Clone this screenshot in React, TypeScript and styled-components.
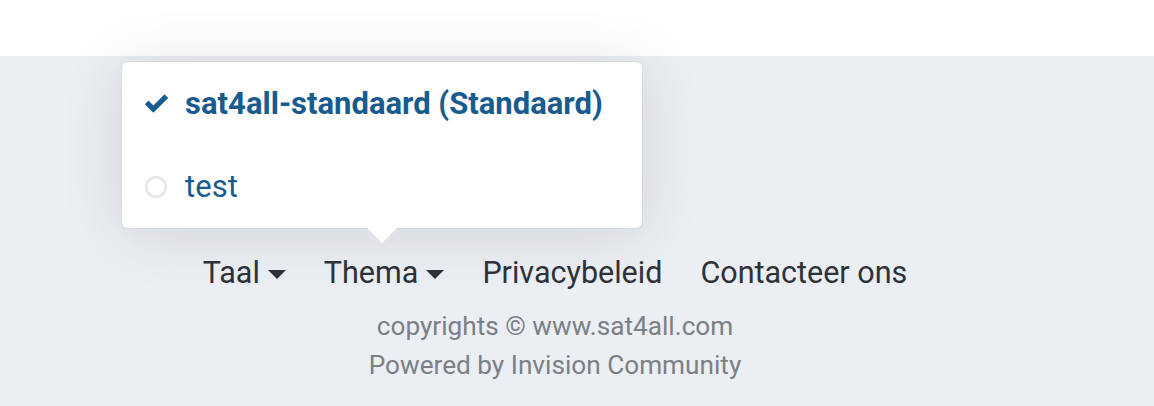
import React from "react";
import styled, { createGlobalStyle } from "styled-components";

const Global = createGlobalStyle`
  html, body { margin: 0; padding: 0; }
  body {
    font-family: Roboto, "Liberation Sans", Arial, sans-serif;
    background: #ebeef2;
    width: 1154px;
    height: 406px;
    overflow: hidden;
  }
`;

const Page = styled.div`
  display: flex;
  flex-direction: column;
  height: 406px;
`;

const TopBar = styled.div`
  height: 56px;
  background: #ffffff;
  flex: none;
`;

const Footer = styled.footer`
  flex: 1;
  background: #ebeef2;
  display: flex;
  flex-direction: column;
  align-items: center;
  padding: 199px 44px 0 0;
`;

const LinkRow = styled.ul`
  list-style: none;
  margin: 0;
  padding: 0;
  display: flex;
  gap: 38px;
  align-items: center;
`;

const LinkItem = styled.li`
  position: relative;
  display: flex;
  align-items: center;
  gap: 8px;
  font-size: 30.5px;
  line-height: 36px;
  color: #2e3238;
`;

const Caret = styled.span`
  display: inline-block;
  width: 0;
  height: 0;
  border-left: 9px solid transparent;
  border-right: 9px solid transparent;
  border-top: 9px solid #2e3238;
  margin-top: 2px;
`;

const Copy = styled.div<{ $top: number }>`
  color: #7b7f86;
  font-size: 26.2px;
  line-height: 30px;
  margin-top: ${(p) => p.$top}px;
`;

const Menu = styled.div`
  position: absolute;
  bottom: calc(100% + 27px);
  left: 50%;
  transform: translateX(calc(-50% - 2px));
  width: 520px;
  background: #ffffff;
  border-radius: 6px;
  box-shadow: 0 0 0 1px rgba(0, 0, 0, 0.04), 0 4px 60px rgba(40, 50, 70, 0.14);
  box-sizing: border-box;

  &::after {
    content: "";
    position: absolute;
    left: 50%;
    bottom: -15px;
    margin-left: -16px;
    border-left: 16px solid transparent;
    border-right: 16px solid transparent;
    border-top: 16px solid #ffffff;
  }
`;

const MenuItem = styled.div<{ $selected?: boolean }>`
  display: flex;
  align-items: center;
  gap: 16px;
  height: 83px;
  padding-left: 21px;
  color: #195b8f;
  font-size: 31px;
  font-weight: ${(p) => (p.$selected ? 700 : 400)};
  white-space: nowrap;
`;

const IconBox = styled.span`
  width: 26px;
  display: flex;
  align-items: center;
  justify-content: center;
`;

const Check = () => (
  <svg width="25" height="19" viewBox="0 0 24 18">
    <path d="M0.8 9.6 L4.3 6.1 L9 10.8 L19.7 0.1 L23.2 3.6 L9 17.8 Z" fill="#195b8f" />
  </svg>
);

const Circle = () => (
  <svg width="24" height="24" viewBox="0 0 24 24">
    <circle cx="12" cy="12" r="9.8" fill="none" stroke="#e9e9eb" strokeWidth="3" />
  </svg>
);

export default function App() {
  return (
    <Page>
      <Global />
      <TopBar />
      <Footer>
        <LinkRow>
          <LinkItem>
            Taal <Caret />
          </LinkItem>
          <LinkItem>
            Thema <Caret />
            <Menu>
              <MenuItem $selected>
                <IconBox>
                  <Check />
                </IconBox>
                sat4all-standaard (Standaard)
              </MenuItem>
              <MenuItem>
                <IconBox>
                  <Circle />
                </IconBox>
                test
              </MenuItem>
            </Menu>
          </LinkItem>
          <LinkItem>Privacybeleid</LinkItem>
          <LinkItem>Contacteer ons</LinkItem>
        </LinkRow>
        <Copy $top={20}>copyrights © www.sat4all.com</Copy>
        <Copy $top={9}>Powered by Invision Community</Copy>
      </Footer>
    </Page>
  );
}
